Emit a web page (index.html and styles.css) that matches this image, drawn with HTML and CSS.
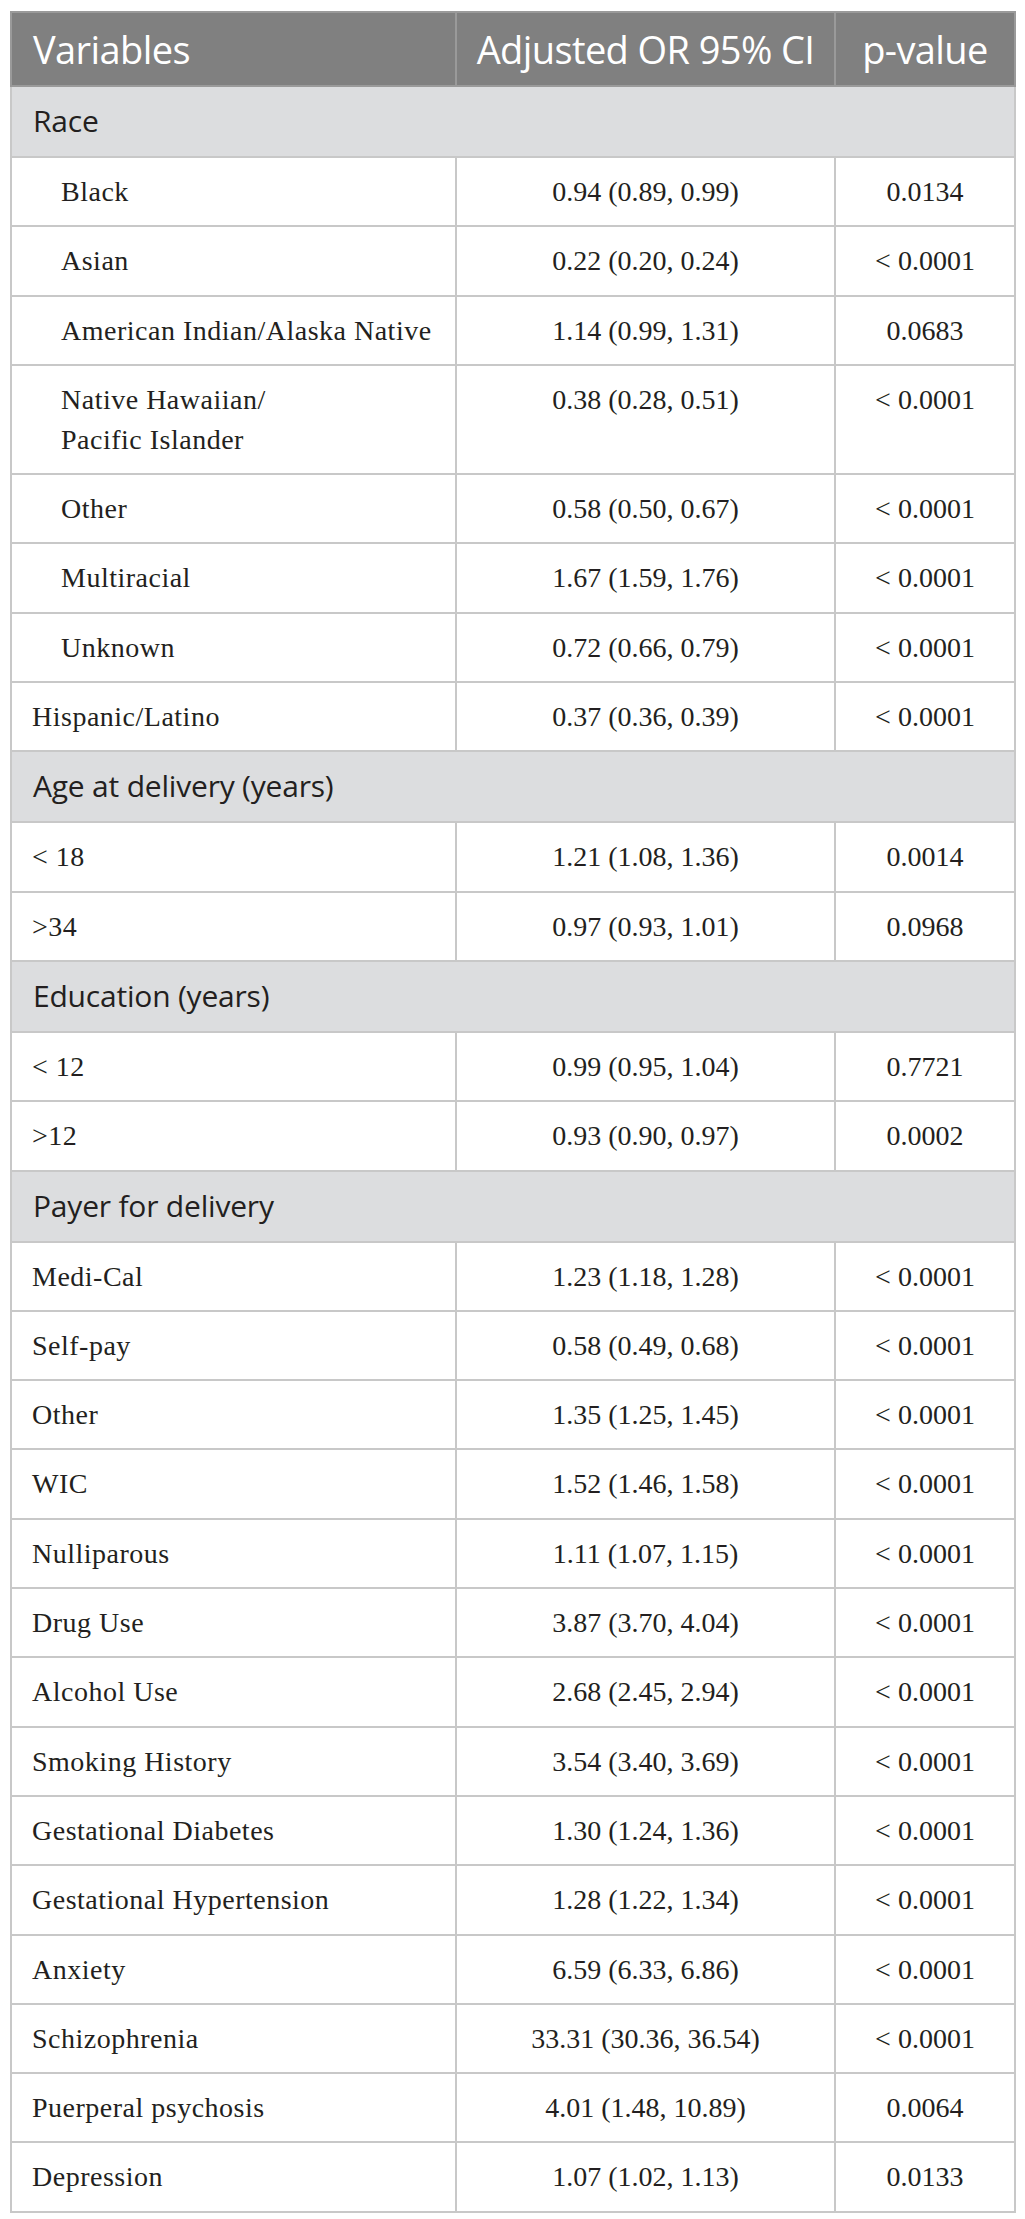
FILE: index.html
```html
<!DOCTYPE html>
<html>
<head>
<meta charset="utf-8">
<link rel="stylesheet" href="styles.css">
</head>
<body>
<table class="or-table">
  <colgroup>
    <col class="c1"><col class="c2"><col class="c3">
  </colgroup>
  <thead>
    <tr class="head">
      <th class="var">Variables</th>
      <th>Adjusted OR 95% CI</th>
      <th>p-value</th>
    </tr>
  </thead>
  <tbody>
    <tr class="group"><td colspan="3">Race</td></tr>
    <tr><td class="sub">Black</td><td>0.94 (0.89, 0.99)</td><td>0.0134</td></tr>
    <tr><td class="sub">Asian</td><td>0.22 (0.20, 0.24)</td><td>&lt; 0.0001</td></tr>
    <tr><td class="sub">American Indian/Alaska Native</td><td>1.14 (0.99, 1.31)</td><td>0.0683</td></tr>
    <tr class="top"><td class="sub">Native Hawaiian/<br>Pacific Islander</td><td>0.38 (0.28, 0.51)</td><td>&lt; 0.0001</td></tr>
    <tr><td class="sub">Other</td><td>0.58 (0.50, 0.67)</td><td>&lt; 0.0001</td></tr>
    <tr><td class="sub">Multiracial</td><td>1.67 (1.59, 1.76)</td><td>&lt; 0.0001</td></tr>
    <tr><td class="sub">Unknown</td><td>0.72 (0.66, 0.79)</td><td>&lt; 0.0001</td></tr>
    <tr><td>Hispanic/Latino</td><td>0.37 (0.36, 0.39)</td><td>&lt; 0.0001</td></tr>
    <tr class="group"><td colspan="3">Age at delivery (years)</td></tr>
    <tr><td>&lt; 18</td><td>1.21 (1.08, 1.36)</td><td>0.0014</td></tr>
    <tr><td>&gt;34</td><td>0.97 (0.93, 1.01)</td><td>0.0968</td></tr>
    <tr class="group"><td colspan="3">Education (years)</td></tr>
    <tr><td>&lt; 12</td><td>0.99 (0.95, 1.04)</td><td>0.7721</td></tr>
    <tr><td>&gt;12</td><td>0.93 (0.90, 0.97)</td><td>0.0002</td></tr>
    <tr class="group"><td colspan="3">Payer for delivery</td></tr>
    <tr><td>Medi-Cal</td><td>1.23 (1.18, 1.28)</td><td>&lt; 0.0001</td></tr>
    <tr><td>Self-pay</td><td>0.58 (0.49, 0.68)</td><td>&lt; 0.0001</td></tr>
    <tr><td>Other</td><td>1.35 (1.25, 1.45)</td><td>&lt; 0.0001</td></tr>
    <tr><td>WIC</td><td>1.52 (1.46, 1.58)</td><td>&lt; 0.0001</td></tr>
    <tr><td>Nulliparous</td><td>1.11 (1.07, 1.15)</td><td>&lt; 0.0001</td></tr>
    <tr><td>Drug Use</td><td>3.87 (3.70, 4.04)</td><td>&lt; 0.0001</td></tr>
    <tr><td>Alcohol Use</td><td>2.68 (2.45, 2.94)</td><td>&lt; 0.0001</td></tr>
    <tr><td>Smoking History</td><td>3.54 (3.40, 3.69)</td><td>&lt; 0.0001</td></tr>
    <tr><td>Gestational Diabetes</td><td>1.30 (1.24, 1.36)</td><td>&lt; 0.0001</td></tr>
    <tr><td>Gestational Hypertension</td><td>1.28 (1.22, 1.34)</td><td>&lt; 0.0001</td></tr>
    <tr><td>Anxiety</td><td>6.59 (6.33, 6.86)</td><td>&lt; 0.0001</td></tr>
    <tr><td>Schizophrenia</td><td>33.31 (30.36, 36.54)</td><td>&lt; 0.0001</td></tr>
    <tr><td>Puerperal psychosis</td><td>4.01 (1.48, 10.89)</td><td>0.0064</td></tr>
    <tr><td>Depression</td><td>1.07 (1.02, 1.13)</td><td>0.0133</td></tr>
  </tbody>
</table>
</body>
</html>
```

FILE: styles.css
```css
html, body {
  margin: 0;
  padding: 0;
  background: #ffffff;
}

body {
  padding: 11px 11px 0 10px;
}

.or-table {
  width: 1004px;
  border-collapse: collapse;
  table-layout: fixed;
  font-family: "Liberation Serif", "Times New Roman", serif;
  color: #231f20;
}

.c1 { width: 445px; }
.c2 { width: 379px; }
.c3 { width: 180px; }

.or-table th,
.or-table td {
  border: 2px solid #c8c8c8;
  font-size: 28px;
  line-height: 40px;
  padding: 14px 10px 13.3px;
  text-align: center;
  vertical-align: middle;
  font-weight: normal;
}

.or-table td:first-child {
  text-align: left;
  padding-left: 20px;
  letter-spacing: 0.5px;
}

.or-table td.sub {
  padding-left: 49px;
}

.or-table tr.top td {
  vertical-align: top;
}

.head th {
  background: #808080;
  color: #ffffff;
  font-family: "Open Sans", "Noto Sans", sans-serif;
  font-size: 38px;
  line-height: 44px;
  padding: 14px 10px 14px;
  border-color: #9a9a9a;
  letter-spacing: -0.6px;
}

.head th.var {
  text-align: left;
  padding-left: 21px;
}

.group td {
  background: #dcdddf;
  font-family: "Open Sans", "Noto Sans", sans-serif;
  font-size: 30px;
  line-height: 42px;
  padding: 13px 10px 14px 21px;
  color: #231f20;
  letter-spacing: -0.2px;
}

.or-table .group td:first-child {
  padding-left: 21px;
  letter-spacing: -0.2px;
}
```
